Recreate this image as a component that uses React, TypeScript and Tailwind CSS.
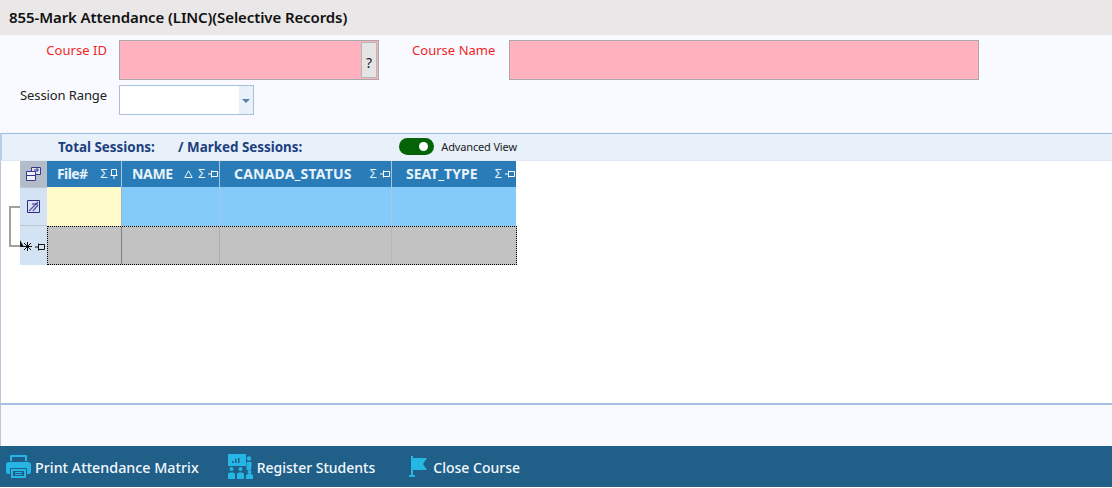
const font = "font-['Noto_Sans','Open_Sans',sans-serif]";

function PinH({ className = "text-white" }: { className?: string }) {
    return (
        <svg width="10" height="8" viewBox="0 0 10 8" className={className} fill="none" stroke="currentColor">
            <path d="M0 4h3M3.500 .5v7M3.500 1.500h6v5h-6" />
        </svg>
    );
}

function PinV() {
    return (
        <svg width="8" height="10" viewBox="0 0 8 10" className="text-white" fill="none" stroke="currentColor">
            <path d="M1.500 .5h5v6h-5zM.5 6.500h7M4 7v3" />
        </svg>
    );
}

function HeaderCell({ label, className, sort, pin }: { label: string; className: string; sort?: boolean; pin: "h" | "v" }) {
    return (
        <div className={`${className} flex h-full items-center`}>
            <span className="text-[14px] leading-none font-bold text-[#e8f3fb]">{label}</span>
            <span className="ml-auto flex items-center gap-[3px] text-[#e8f3fb]">
                {sort && (
                    <svg width="9" height="8" viewBox="0 0 9 8" className="mr-[2px]" fill="none" stroke="currentColor">
                        <path d="M4.500 .8 8.200 7.500H.8z" />
                    </svg>
                )}
                <span className="font-['Liberation_Sans',sans-serif] text-[12px] leading-none">Σ</span>
                {pin === "h" ? <PinH /> : <PinV />}
            </span>
        </div>
    );
}

function PrinterIcon() {
    return (
        <svg width="25" height="23" viewBox="0 0 25 23" className="text-[#25b6e6]" fill="currentColor">
            <path d="M5 0h15a1 1 0 0 1 1 1v5h-2V2H6v4H4V1a1 1 0 0 1 1-1z" />
            <path d="M3 7h19a3 3 0 0 1 3 3v7a2 2 0 0 1-2 2h-2v-6H4v6H2a2 2 0 0 1-2-2v-7a3 3 0 0 1 3-3z" />
            <path d="M5 14h15v9H5zm2 2v5h11v-5z" fillRule="evenodd" />
            <path d="M9 17h7v1H9zM9 19h7v1H9z" />
        </svg>
    );
}

function BoardIcon() {
    return (
        <svg width="25" height="25" viewBox="0 0 25 25" className="text-[#25b6e6]" fill="currentColor">
            <path d="M0 0h18v12H0z" />
            <path d="M4 9V7h1.500v2zM7 9V5h1.500v4zM10 9V4h1.500v5z" fill="#1f5f88" />
            <circle cx="21" cy="4.500" r="2.200" />
            <path d="M18.500 8h5v4l-.5 4h-4.500z" />
            <circle cx="3.500" cy="15" r="2" />
            <path d="M0 25v-4.500a2 2 0 0 1 2-2h3a2 2 0 0 1 2 2V25z" />
            <circle cx="12.500" cy="15" r="2" />
            <path d="M9 25v-4.500a2 2 0 0 1 2-2h3a2 2 0 0 1 2 2V25z" />
            <circle cx="21.500" cy="18" r="2" />
            <path d="M18 25v-3a2 2 0 0 1 2-2h3a2 2 0 0 1 2 2v3z" />
        </svg>
    );
}

function FlagIcon() {
    return (
        <svg width="18" height="21" viewBox="0 0 18 21" className="text-[#25b6e6]" fill="currentColor">
            <path d="M2 0h2v2h14l-4 6 4 6H4v5H2z" />
            <path d="M0 19h6v2H0z" />
        </svg>
    );
}

export default function App() {
    return (
        <div className={`${font} flex h-[488px] w-[1112px] flex-col overflow-hidden bg-white`}>
            <div className="flex h-[35px] shrink-0 items-center bg-[#e9e7e7] pb-[1px] pl-[9px]">
                <h1 className="text-[15px] leading-none font-semibold tracking-[-0.1px] text-[#111]">
                    855-Mark Attendance (LINC)(Selective Records)
                </h1>
            </div>

            <div className="h-[98px] shrink-0 bg-[#f8faff] pt-[5px]">
                <div className="flex h-[40px]">
                    <span className="w-[107px] pt-px text-right text-[13px] leading-[18px] tracking-[0.05px] text-[#f01f1f]">Course ID</span>
                    <div className="ml-[12px] flex h-[40px] w-[260px] justify-end border border-[#a8a8ad] bg-[#ffb2be] p-px">
                        <div className="flex w-[16px] items-center justify-center border border-[#b5b5b5] bg-[#e4e4e4] pt-[6px] text-[14px] leading-none text-[#222]">
                            ?
                        </div>
                    </div>
                    <span className="ml-[33px] w-[84px] pt-px text-[13px] leading-[18px] tracking-[0.03px] text-[#f01f1f]">Course Name</span>
                    <div className="ml-[13px] h-[40px] w-[470px] border border-[#a8a8ad] bg-[#ffb2be]" />
                </div>
                <div className="mt-[5px] flex h-[30px]">
                    <span className="w-[107px] pt-px text-right text-[13px] leading-[18px] tracking-[-0.1px] text-[#222]">Session Range</span>
                    <div className="ml-[12px] flex h-[30px] w-[135px] justify-end border border-[#a9c0dc] bg-white">
                        <div className="flex w-[14px] items-center justify-center bg-[#e8f0fa]">
                            <div className="mt-[2px] h-0 w-0 border-x-[4px] border-t-[4px] border-x-transparent border-t-[#5b7fae]" />
                        </div>
                    </div>
                </div>
            </div>

            <div className="flex h-[28px] shrink-0 items-center border-t border-b border-l-2 border-t-[#9db8e2] border-b-[#dfe8f4] border-l-[#b9cfe8] bg-[#e8f0fa] pt-px pl-[56px]">
                <span className="w-[120px] text-[13.400px] leading-none font-bold text-[#1c3f7f]">Total Sessions:</span>
                <span className="text-[13.400px] leading-none font-bold text-[#1c3f7f]">/ Marked Sessions:</span>
                <div className="mb-[3px] ml-[97px] flex h-[17px] w-[35px] items-center justify-end rounded-full bg-[#046307] pr-[6px]">
                    <div className="h-[9px] w-[9px] rounded-full bg-white" />
                </div>
                <span className="mb-[3px] ml-[7px] text-[11px] leading-none tracking-[-0.15px] text-[#222]">Advanced View</span>
            </div>

            <div className="relative h-[242px] shrink-0 border-l border-[#b9c6d8] bg-white pl-[19px]">
                <svg width="24" height="42" viewBox="0 0 24 42" className="absolute top-[45px] left-[7px]" fill="none">
                    <path d="M12 1H2v39h11" stroke="#a0a0a0" strokeWidth="2" />
                    <path d="M12 34l4 7h-4z" fill="#111" />
                </svg>
                <div className="w-[497px]">
                    <div className="flex h-[26px]">
                        <div className="flex w-[27px] shrink-0 items-center justify-center bg-[#b3bcc9]">
                            <svg width="15" height="14" viewBox="0 0 15 14" fill="none" stroke="#3a3590">
                                <path d="M5.500 .5h9v7h-9z" fill="#dfe3f2" />
                                <path d="M.5 4.500h9v4h-9zM.5 8.500h9v5h-9z" fill="#eef0f8" />
                                <path d="M8 3h5M11 1v4" />
                            </svg>
                        </div>
                        <div className="mr-px flex h-full flex-1 bg-[#2a7cb8]">
                            <HeaderCell label="File#" className="w-[75px] shrink-0 border-r border-[#a9c6de] pr-[3px] pl-[10px] tracking-[-0.6px]" pin="v" />
                            <HeaderCell label="NAME" className="w-[98px] shrink-0 border-r border-[#a9c6de] pr-px pl-[10px] tracking-[-0.3px]" sort pin="h" />
                            <HeaderCell label="CANADA_STATUS" className="w-[172px] shrink-0 border-r border-[#a9c6de] pr-px pl-[14px] tracking-[0.2px]" pin="h" />
                            <HeaderCell label="SEAT_TYPE" className="flex-1 pr-px pl-[14px]" pin="h" />
                        </div>
                    </div>
                    <div className="flex h-[39px]">
                        <div className="flex w-[27px] shrink-0 items-center justify-center border-y border-[#bcc6d4] bg-[#d3e3f3]">
                            <svg width="13" height="13" viewBox="0 0 13 13" fill="#d8e0f4" stroke="#2f2a86">
                                <path d="M.5 .5h12v12H.5z" />
                                <path d="M2 11 11 2M6 11l5-6" fill="none" stroke="#5a56a5" strokeWidth="1.300" />
                                <path d="M5 4h6" fill="none" />
                            </svg>
                        </div>
                        <div className="w-[75px] border-r border-[#9fb4c8] bg-[#fffbc9]" />
                        <div className="w-[98px] border-r border-[#a8c8e8] bg-[#85cbfa]" />
                        <div className="w-[172px] border-r border-[#a8c8e8] bg-[#85cbfa]" />
                        <div className="mr-px flex-1 bg-[#85cbfa]" />
                    </div>
                    <div className="flex h-[39px]">
                        <div className="flex w-[27px] shrink-0 items-center gap-[3px] bg-[#d3e3f3] pt-[2px] pl-[3px]">
                            <svg width="9" height="9" viewBox="0 0 9 9" fill="none" stroke="#111">
                                <path d="M4.500 0v9M0 4.500h9M1 1l7 7M8 1 1 8" />
                            </svg>
                            <PinH className="text-[#111]" />
                        </div>
                        <div className="flex flex-1 border border-dotted border-black bg-[#c2c2c2]">
                            <div className="w-[74px] border-r border-[#808080]" />
                            <div className="w-[98px] border-r border-[#adadad]" />
                            <div className="w-[172px] border-r border-[#b7b7bf]" />
                        </div>
                    </div>
                </div>
            </div>

            <div className="h-[43px] shrink-0 border-t-2 border-l border-t-[#a9c0e2] border-l-[#b9c6d8] bg-[#f8faff]" />

            <div className="flex h-[41px] shrink-0 items-center bg-[#1f5f88] font-medium text-[#f2f8fc]">
                <button className="ml-[6px] flex items-center gap-[4px]">
                    <PrinterIcon />
                    <span className="pt-[2px] text-[14.300px]">Print Attendance Matrix</span>
                </button>
                <button className="ml-[29px] flex items-center gap-[4px]">
                    <BoardIcon />
                    <span className="pt-[2px] text-[14px]">Register Students</span>
                </button>
                <button className="ml-[34px] flex items-center gap-[6px]">
                    <FlagIcon />
                    <span className="pt-[2px] text-[14px]">Close Course</span>
                </button>
            </div>
            <div className="h-px bg-white" />
        </div>
    );
}
